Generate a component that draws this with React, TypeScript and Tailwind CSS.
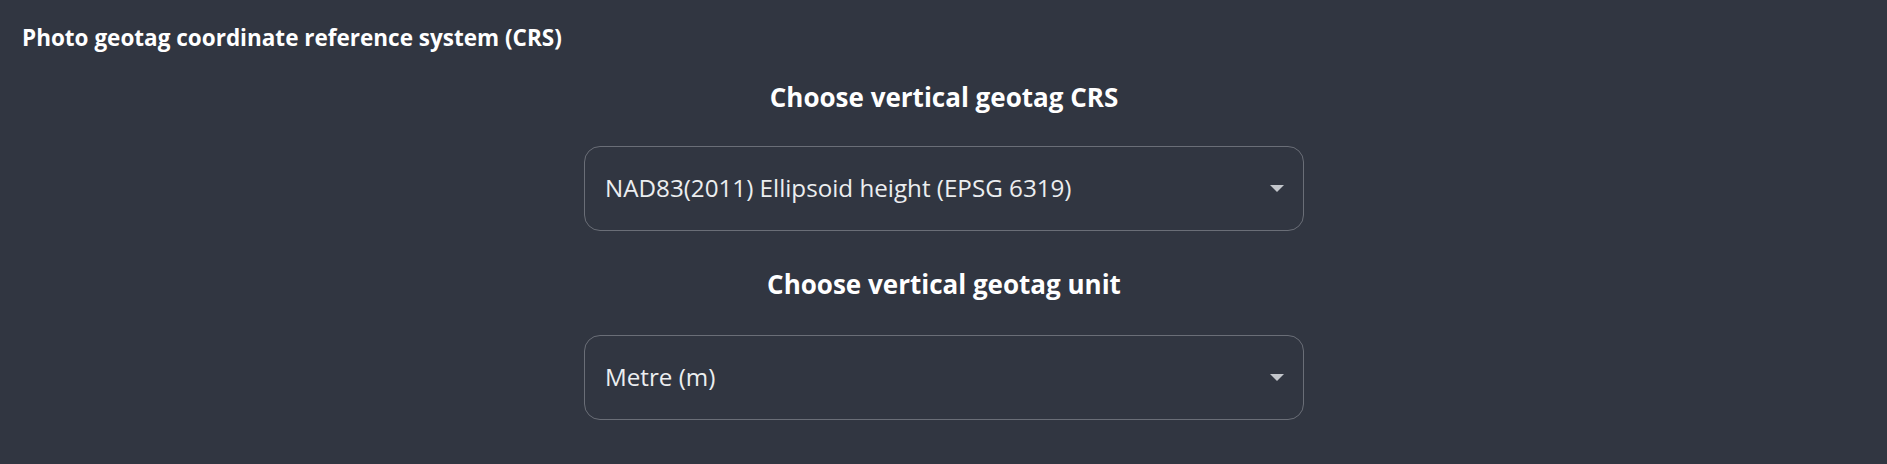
const fontStack = "font-['Open_Sans','Liberation_Sans',sans-serif]"

function Caret() {
  return (
    <svg width="14" height="7" viewBox="0 0 14 7" className="shrink-0">
      <path d="M0 0 L14 0 L7 7 Z" fill="#c3c6cb" />
    </svg>
  )
}

function SelectBox({ value }: { value: string }) {
  return (
    <button
      type="button"
      className="w-[720px] h-[85px] flex items-center justify-between pl-[20px] pr-[19px] rounded-[16px] border border-[#6a6e77] bg-transparent text-left"
    >
      <span className="text-[24.2px] text-[#eceef0]">{value}</span>
      <Caret />
    </button>
  )
}

function Field({ label, value, spacing }: { label: string; value: string; spacing: string }) {
  return (
    <div className="flex flex-col items-center">
      <h3 className="text-[26px] leading-[32px] font-bold text-white">{label}</h3>
      <div className={spacing}>
        <SelectBox value={value} />
      </div>
    </div>
  )
}

export default function App() {
  return (
    <div className={`${fontStack} w-full h-[464px] bg-[#313641] pl-[22px] pr-[21px] pt-[24px]`}>
      <h2 className="text-[22.5px] leading-[28px] font-bold text-white">
        Photo geotag coordinate reference system (CRS)
      </h2>
      <div className="flex flex-col items-center mt-[29px] gap-[37px]">
        <Field label="Choose vertical geotag CRS" value="NAD83(2011) Ellipsoid height (EPSG 6319)" spacing="mt-[33px]" />
        <Field label="Choose vertical geotag unit" value="Metre (m)" spacing="mt-[35px]" />
      </div>
    </div>
  )
}
